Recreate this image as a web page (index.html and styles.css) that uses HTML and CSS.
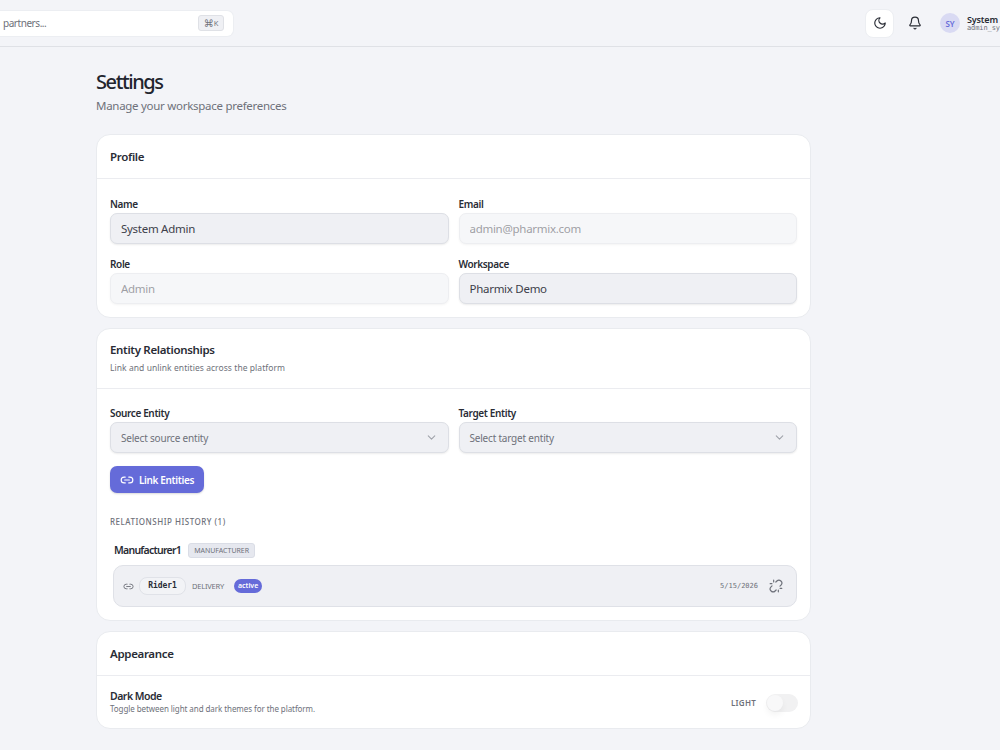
FILE: index.html
```html
<!DOCTYPE html>
<html lang="en">
<head>
    <meta charset="UTF-8">
    <meta name="viewport" content="width=device-width, initial-scale=1.0">
    <title>Settings</title>
    <link rel="stylesheet" href="styles.css">
</head>
<body>
    <header class="topbar">
        <div class="search">
            <span class="search-text">partners...</span>
            <kbd class="shortcut"><span class="cmd">⌘</span>K</kbd>
        </div>
        <div class="top-actions">
            <button class="theme-btn" aria-label="Toggle theme">
                <svg class="icon" viewBox="0 0 24 24"><path d="M12 3a6 6 0 0 0 9 9 9 9 0 1 1-9-9Z"/></svg>
            </button>
            <button class="bell-btn" aria-label="Notifications">
                <svg class="icon" viewBox="0 0 24 24"><path d="M10.3 21a1.94 1.94 0 0 0 3.4 0"/><path d="M3.3 15.3A1 1 0 0 0 4 17h16a1 1 0 0 0 .7-1.7C19.4 14 18 12.500 18 8A6 6 0 0 0 6 8c0 4.500-1.400 6-2.700 7.300"/></svg>
            </button>
            <div class="avatar">SY</div>
            <div class="user">
                <div class="user-name">System Admin</div>
                <div class="user-id">admin_system</div>
            </div>
        </div>
    </header>

    <main class="page">
        <h1>Settings</h1>
        <p class="subtitle">Manage your workspace preferences</p>

        <section class="card">
            <div class="card-header">
                <h2>Profile</h2>
            </div>
            <div class="card-body form-grid">
                <div class="field">
                    <label for="name">Name</label>
                    <input type="text" id="name" value="System Admin">
                </div>
                <div class="field">
                    <label for="email">Email</label>
                    <input type="text" id="email" value="admin@pharmix.com" disabled>
                </div>
                <div class="field">
                    <label for="role">Role</label>
                    <input type="text" id="role" value="Admin" disabled>
                </div>
                <div class="field">
                    <label for="workspace">Workspace</label>
                    <input type="text" id="workspace" value="Pharmix Demo">
                </div>
            </div>
        </section>

        <section class="card">
            <div class="card-header tall">
                <h2>Entity Relationships</h2>
                <p class="hint">Link and unlink entities across the platform</p>
            </div>
            <div class="card-body entities">
                <div class="form-grid">
                    <div class="field">
                        <label>Source Entity</label>
                        <button class="select">
                            <span>Select source entity</span>
                            <svg class="icon chevron" viewBox="0 0 24 24"><path d="m6 9 6 6 6-6"/></svg>
                        </button>
                    </div>
                    <div class="field">
                        <label>Target Entity</label>
                        <button class="select">
                            <span>Select target entity</span>
                            <svg class="icon chevron" viewBox="0 0 24 24"><path d="m6 9 6 6 6-6"/></svg>
                        </button>
                    </div>
                </div>

                <button class="link-btn">
                    <svg class="icon" viewBox="0 0 24 24"><path d="M9 17H7A5 5 0 0 1 7 7h2"/><path d="M15 7h2a5 5 0 1 1 0 10h-2"/><path d="M8 12h8"/></svg>
                    <span>Link Entities</span>
                </button>

                <h3>Relationship History (1)</h3>
                <div class="group-title">
                    <span class="group-name">Manufacturer1</span>
                    <span class="type-tag">MANUFACTURER</span>
                </div>
                <div class="relation">
                    <svg class="icon relation-icon" viewBox="0 0 24 24"><path d="M9 17H7A5 5 0 0 1 7 7h2"/><path d="M15 7h2a5 5 0 1 1 0 10h-2"/><path d="M8 12h8"/></svg>
                    <span class="entity">Rider1</span>
                    <span class="kind">DELIVERY</span>
                    <span class="status">active</span>
                    <span class="date">5/15/2026</span>
                    <svg class="icon unlink" viewBox="0 0 24 24"><path d="m18.840 12.250 1.720-1.710h-.020a5.004 5.004 0 0 0-.120-7.070 5.006 5.006 0 0 0-6.950 0l-1.720 1.710"/><path d="m5.170 11.750-1.710 1.710a5.004 5.004 0 0 0 .120 7.070 5.006 5.006 0 0 0 6.950 0l1.710-1.710"/><path d="M8 2v3M2 8h3M16 19v3M19 16h3"/></svg>
                </div>
            </div>
        </section>

        <section class="card">
            <div class="card-header">
                <h2>Appearance</h2>
            </div>
            <div class="appearance">
                <div>
                    <div class="option-name">Dark Mode</div>
                    <p class="option-text">Toggle between light and dark themes for the platform.</p>
                </div>
                <div class="mode">
                    <span>LIGHT</span>
                    <div class="toggle"><div class="knob"></div></div>
                </div>
            </div>
        </section>
    </main>
</body>
</html>
```
FILE: styles.css
```css
* {
    box-sizing: border-box;
}
body {
    margin: 0;
    height: 750px;
    overflow: hidden;
    background: #f3f4f8;
    color: #292c35;
    font-family: "Noto Sans", "Open Sans", sans-serif;
}
h1, h2, h3, p {
    margin: 0;
}
button {
    font-family: inherit;
    border: none;
    background: none;
    padding: 0;
}
.icon {
    display: block;
    flex-shrink: 0;
    fill: none;
    stroke: currentColor;
    stroke-width: 2;
    stroke-linecap: round;
    stroke-linejoin: round;
}

/* Top bar */
.topbar {
    display: flex;
    align-items: center;
    justify-content: space-between;
    height: 47px;
    border-bottom: 1px solid #dfe1e6;
}
.search {
    display: flex;
    align-items: center;
    justify-content: space-between;
    width: 234px;
    height: 27px;
    padding: 0 9px 0 3px;
    background: #fff;
    border: 1px solid #eceef2;
    border-left: none;
    border-radius: 0 7px 7px 0;
}
.search-text {
    font-size: 10px;
    letter-spacing: -0.45px;
    color: #6e717a;
}
.shortcut {
    display: flex;
    align-items: center;
    justify-content: center;
    width: 26px;
    height: 16px;
    font-family: inherit;
    font-size: 7.5px;
    color: #6e717a;
    background: #eff0f4;
    border: 1px solid #dfe1e6;
    border-radius: 3px;
}
.cmd {
    font-family: "DejaVu Sans", sans-serif;
    font-size: 10px;
}
.top-actions {
    display: flex;
    align-items: center;
    width: 135px;
    flex-shrink: 0;
}
.top-actions .icon {
    width: 14px;
    height: 14px;
    color: #292c35;
}
.theme-btn {
    display: flex;
    align-items: center;
    justify-content: center;
    width: 29px;
    height: 29px;
    background: #fff;
    border: 1px solid #eceef2;
    border-radius: 8px;
    flex-shrink: 0;
}
.bell-btn {
    margin-left: 14px;
}
.avatar {
    display: flex;
    align-items: center;
    justify-content: center;
    width: 20px;
    height: 20px;
    margin-left: 18px;
    flex-shrink: 0;
    border-radius: 50%;
    background: #d9daf3;
    color: #656bd9;
    font-size: 8px;
    font-weight: 600;
    letter-spacing: -0.2px;
}
.user {
    margin-left: 7px;
    padding-top: 1px;
    white-space: nowrap;
}
.user-name {
    font-size: 9px;
    font-weight: 600;
    line-height: 9px;
    letter-spacing: -0.15px;
}
.user-id {
    font-family: "DejaVu Sans Mono", monospace;
    font-size: 7px;
    line-height: 9px;
    letter-spacing: -0.1px;
    color: #6e717a;
}

/* Page */
.page {
    width: 715px;
    margin-left: 96px;
    padding-top: 23px;
}
h1 {
    font-size: 20px;
    font-weight: 550;
    line-height: 24px;
    letter-spacing: -1.4px;
    color: #22252e;
}
.subtitle {
    margin: 4px 0 21px;
    font-size: 11.5px;
    line-height: 15px;
    letter-spacing: -0.28px;
    color: #6e717a;
}
.card {
    margin-bottom: 10px;
    background: #fff;
    border: 1px solid #e9ebef;
    border-radius: 14px;
}
.card-header {
    display: flex;
    flex-direction: column;
    justify-content: center;
    height: 44px;
    padding: 0 13px;
    border-bottom: 1px solid #ebecf0;
}
.card-header.tall {
    height: 60px;
}
h2 {
    font-size: 11.5px;
    font-weight: 600;
    line-height: 16px;
    letter-spacing: -0.33px;
}
.hint {
    margin-top: 3px;
    font-size: 8.5px;
    line-height: 14px;
    letter-spacing: 0.06px;
    color: #6e717a;
}
.card-body {
    padding: 18px 13px 13px;
}
.card-body.entities {
    padding-top: 17px;
}
.form-grid {
    display: grid;
    grid-template-columns: 1fr 1fr;
    gap: 13px 10px;
}
label {
    display: block;
    margin-bottom: 2px;
    font-size: 10px;
    font-weight: 600;
    line-height: 14px;
    letter-spacing: -0.36px;
}
.field input, .select {
    display: block;
    width: 100%;
    height: 31px;
    padding: 0 10px;
    background: #eff0f4;
    border: 1px solid #dddfe5;
    border-radius: 7px;
    box-shadow: 0 1px 2px rgba(0, 0, 0, 0.08);
    font-family: inherit;
    font-size: 11.5px;
    letter-spacing: -0.28px;
    color: #3d404a;
}
.field input:disabled {
    opacity: 0.5;
    color: #3d404a;
}
.select {
    display: flex;
    align-items: center;
    justify-content: space-between;
    font-size: 10px;
    letter-spacing: -0.2px;
    color: #6e717a;
}
.chevron {
    width: 13px;
    height: 13px;
    margin-bottom: 1px;
    color: #a0a3ab;
}
.link-btn {
    display: flex;
    align-items: center;
    gap: 5px;
    width: 94px;
    height: 27px;
    margin-top: 13px;
    padding: 0 10px;
    background: #656bd9;
    border-radius: 7px;
    box-shadow: 0 1px 2px rgba(0, 0, 0, 0.15);
    color: #fff;
    font-size: 10px;
    font-weight: 600;
    letter-spacing: -0.36px;
    white-space: nowrap;
}
.link-btn .icon {
    width: 14px;
    height: 14px;
}
h3 {
    margin-top: 22px;
    font-size: 8px;
    font-weight: 500;
    line-height: 14px;
    letter-spacing: 0.5px;
    text-transform: uppercase;
    color: #6e717a;
}
.group-title {
    display: flex;
    align-items: center;
    gap: 7px;
    margin: 13px 0 7px 4px;
}
.group-name {
    padding-top: 1px;
    font-size: 10.5px;
    font-weight: 600;
    line-height: 15px;
    letter-spacing: -0.73px;
}
.type-tag {
    height: 15px;
    padding: 0 5px;
    background: #e6e8ef;
    border: 1px solid #dadde6;
    border-radius: 3px;
    font-size: 7px;
    line-height: 13px;
    letter-spacing: -0.02px;
    color: #6e717a;
}
.relation {
    display: flex;
    align-items: center;
    height: 42px;
    margin-left: 3px;
    padding: 0 13px 0 9px;
    background: #eff0f4;
    border: 1px solid #dfe1e7;
    border-radius: 10px;
}
.relation-icon {
    width: 11px;
    height: 11px;
    color: #6e717a;
}
.entity {
    width: 47px;
    height: 18px;
    margin-left: 5px;
    border: 1px solid #e0e2e8;
    border-radius: 8px;
    background: #f2f3f6;
    font-family: "DejaVu Sans Mono", monospace;
    font-size: 8px;
    font-weight: bold;
    line-height: 15px;
    letter-spacing: -0.1px;
    text-align: center;
}
.kind {
    margin-left: 6px;
    font-size: 7.5px;
    letter-spacing: -0.22px;
    color: #6e717a;
}
.status {
    height: 14px;
    margin-left: 10px;
    padding: 0 4px;
    border-radius: 7px;
    background: #656bd9;
    color: #fff;
    font-size: 7px;
    font-weight: 600;
    line-height: 14px;
}
.date {
    margin-left: auto;
    font-family: "DejaVu Sans Mono", monospace;
    font-size: 7px;
    color: #6e717a;
}
.unlink {
    width: 14px;
    height: 14px;
    margin-left: 11px;
    color: #6e717a;
}
.appearance {
    display: flex;
    justify-content: space-between;
    height: 52px;
    padding: 13px 12px 0 13px;
}
.option-name {
    font-size: 10.5px;
    font-weight: 600;
    line-height: 15px;
    letter-spacing: -0.5px;
}
.option-text {
    font-size: 8px;
    line-height: 10px;
    letter-spacing: -0.07px;
    color: #6e717a;
}
.mode {
    display: flex;
    align-items: center;
    gap: 10px;
    height: 27px;
    font-size: 8px;
    font-weight: 600;
    letter-spacing: 0.25px;
    color: #6e717a;
}
.toggle {
    width: 32px;
    height: 18px;
    padding: 1px;
    border-radius: 9px;
    background: #f1f1f2;
}
.knob {
    width: 16px;
    height: 16px;
    border-radius: 50%;
    background: #f8f8f9;
    box-shadow: 0 4px 6px rgba(0, 0, 0, 0.05);
}
```
